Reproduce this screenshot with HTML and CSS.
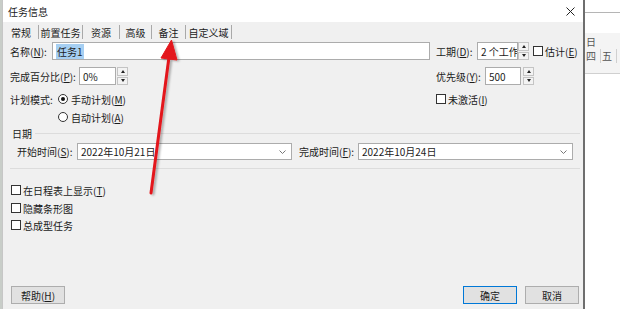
FILE: index.html
```
<!DOCTYPE html>
<html lang="zh-CN">
<head>
  <meta charset="UTF-8">
  <title>任务信息</title>
  <link rel="stylesheet" href="styles.css">
</head>
<body>
  <div class="screen">
    <div class="side-left"></div>

    <!-- Task info dialog -->
    <div class="dialog">
      <div class="titlebar">
        <span class="title">任务信息</span>
        <svg class="close" width="9" height="9" viewBox="0 0 9 9">
          <path d="M0.5 0.5 L8.5 8.5 M8.5 0.5 L0.5 8.5" stroke="#222" stroke-width="1"/>
        </svg>
      </div>

      <div class="tabs">
        <div class="tab active">常规</div>
        <div class="tab">前置任务</div>
        <div class="tab">资源</div>
        <div class="tab">高级</div>
        <div class="tab">备注</div>
        <div class="tab">自定义域</div>
      </div>

      <div class="panel">
        <div class="row row-field first">
          <div class="col-left">
            <span class="lbl lbl-name">名称(<u>N</u>):</span>
            <div class="input input-name"><span class="sel-text">任务1</span></div>
          </div>
          <div class="col-right">
            <span class="lbl lbl-dur">工期(<u>D</u>):</span>
            <div class="input input-dur">2 个工作日</div>
            <div class="spinner"><span class="up"></span><span class="down"></span></div>
            <span class="check gap-l"></span>
            <span>估计(<u>E</u>)</span>
          </div>
        </div>

        <div class="row row-field second">
          <div class="col-left">
            <span class="lbl lbl-pct">完成百分比(<u>P</u>):</span>
            <div class="input input-pct">0%</div>
            <div class="spinner sp-pct"><span class="up"></span><span class="down"></span></div>
          </div>
          <div class="col-right">
            <span class="lbl lbl-pri">优先级(<u>Y</u>):</span>
            <div class="input input-pri">500</div>
            <div class="spinner sp-pri"><span class="up"></span><span class="down"></span></div>
          </div>
        </div>

        <div class="row row-opt mode">
          <div class="col-left">
            <span class="lbl lbl-mode">计划模式:</span>
            <span class="radio checked"></span>
            <span>手动计划(<u>M</u>)</span>
          </div>
          <div class="col-right">
            <span class="check"></span>
            <span>未激活(<u>I</u>)</span>
          </div>
        </div>

        <div class="row row-opt auto">
          <span class="radio"></span>
          <span>自动计划(<u>A</u>)</span>
        </div>

        <div class="group-head">
          <span>日期</span>
          <div class="group-line"></div>
        </div>

        <div class="row date-row">
          <span class="lbl lbl-start">开始时间(<u>S</u>):</span>
          <div class="input select">
            <span>2022年10月21日</span>
            <svg width="7" height="4" viewBox="0 0 7 4"><path d="M0.5 0.5 L3.5 3.5 L6.5 0.5" fill="none" stroke="#777" stroke-width="1"/></svg>
          </div>
          <span class="lbl lbl-end">完成时间(<u>F</u>):</span>
          <div class="input select">
            <span>2022年10月24日</span>
            <svg width="7" height="4" viewBox="0 0 7 4"><path d="M0.5 0.5 L3.5 3.5 L6.5 0.5" fill="none" stroke="#777" stroke-width="1"/></svg>
          </div>
        </div>

        <div class="divider"></div>

        <div class="row row-opt cb-1"><span class="check"></span><span>在日程表上显示(<u>T</u>)</span></div>
        <div class="row row-opt cb-2"><span class="check"></span><span>隐藏条形图</span></div>
        <div class="row row-opt cb-3"><span class="check"></span><span>总成型任务</span></div>

        <div class="buttons">
          <button class="btn">帮助(<u>H</u>)</button>
          <div class="spacer"></div>
          <button class="btn primary">确定</button>
          <button class="btn">取消</button>
        </div>
      </div>
    </div>

    <!-- Gantt sheet behind the dialog -->
    <div class="backdrop">
      <div class="bd-top"></div>
      <div class="bd-head">
        <div class="bd-day">日</div>
        <div class="bd-week"><span>四</span><span>五</span></div>
      </div>
    </div>

    <!-- Red annotation arrow -->
    <svg class="arrow" width="620" height="309" viewBox="0 0 620 309">
      <defs>
        <filter id="shadow" x="-50%" y="-10%" width="200%" height="120%">
          <feDropShadow dx="2" dy="1" stdDeviation="1.2" flood-color="#000" flood-opacity="0.3"/>
        </filter>
      </defs>
      <g filter="url(#shadow)" fill="#e3151b" stroke="#e3151b">
        <line x1="151" y1="193" x2="169" y2="57" stroke-width="3" stroke-linecap="round"/>
        <polygon points="171.5,40 161,58 177,60" stroke-width="1" stroke-linejoin="round"/>
      </g>
    </svg>
  </div>
</body>
</html>
```
FILE: styles.css
```
/* Base */
* {
  box-sizing: border-box;
}

body {
  margin: 0;
  width: 620px;
  height: 309px;
  overflow: hidden;
  background: #fff;
  font-family: "Noto Sans CJK SC", "Noto Sans", sans-serif;
  font-size: 10px;
  color: #1b1b1b;
}

u {
  text-decoration: underline;
  text-underline-offset: 1px;
}

.screen {
  position: relative;
  display: flex;
  height: 309px;
}

.side-left {
  width: 2px;
  background: #c8cdc8;
}

/* Dialog frame */
.dialog {
  width: 583px;
  background: #f0f0f0;
  border-left: 1px solid #c6c6c6;
  border-right: 2px solid #6e6e6e;
  display: flex;
  flex-direction: column;
}

.titlebar {
  height: 22px;
  background: #fff;
  display: flex;
  align-items: center;
  justify-content: space-between;
  padding: 0 8px 0 5px;
  font-size: 10px;
}

/* Tabs */
.tabs {
  height: 18px;
  display: flex;
  padding-left: 5px;
}

.tab {
  display: flex;
  align-items: center;
  justify-content: center;
  margin: 3px 0 1px;
  border-right: 1px solid #a9a9a9;
}

.tab:nth-child(1) { width: 31px; justify-content: flex-start; padding-left: 3px; }
.tab:nth-child(2) { width: 44px; }
.tab:nth-child(3) { width: 37px; }
.tab:nth-child(4) { width: 32px; }
.tab:nth-child(5) { width: 34px; }
.tab:nth-child(6) { width: 46px; }

/* Form panel */
.panel {
  flex: 1;
  display: flex;
  flex-direction: column;
  padding: 0 3px 0 7px;
}

.row {
  display: flex;
  align-items: center;
}

.row-field {
  height: 18px;
}

.row-opt {
  height: 16px;
}

.first { margin-top: 2px; }
.second { margin-top: 7px; }
.mode { margin-top: 6px; }
.auto { margin-top: 2px; padding-left: 48px; }

.col-left {
  width: 426px;
  display: flex;
  align-items: center;
}

.col-right {
  display: flex;
  align-items: center;
}

.lbl {
  flex-shrink: 0;
}

.lbl-name { width: 42px; }
.lbl-dur { width: 41px; }
.lbl-pct { width: 69px; }
.lbl-pri { width: 49px; }
.lbl-mode { width: 48px; }
.lbl-start { width: 60px; }
.lbl-end { width: 59px; margin-left: 7px; }

.input {
  height: 18px;
  background: #fff;
  border: 1px solid #acacac;
  padding-left: 3px;
  display: flex;
  align-items: center;
  overflow: hidden;
  white-space: nowrap;
}

.input-name { width: 378px; }
.input-dur { width: 41px; }
.input-pct { width: 37px; }
.input-pri { width: 36px; }

.sel-text {
  background: #a6cff2;
  padding: 0 1px;
}

.spinner {
  width: 11px;
  height: 18px;
  display: flex;
  flex-direction: column;
  gap: 1px;
}

.sp-pct { margin-left: 1px; }
.sp-pri { margin-left: 2px; }

.spinner span {
  flex: 1;
  background: #f3f3f3;
  border: 1px solid #c4c4c4;
  display: flex;
  align-items: center;
  justify-content: center;
}

.spinner .up::before,
.spinner .down::before {
  content: '';
  border-left: 2.5px solid transparent;
  border-right: 2.5px solid transparent;
}

.spinner .up::before { border-bottom: 3px solid #222; }
.spinner .down::before { border-top: 3px solid #222; }

.check {
  width: 10px;
  height: 10px;
  border: 1px solid #333;
  background: #fff;
  margin-right: 2px;
  flex-shrink: 0;
}

.gap-l { margin-left: 4px; }

.radio {
  width: 10px;
  height: 10px;
  border: 1px solid #333;
  border-radius: 50%;
  background: #fff;
  margin-right: 3px;
  display: flex;
  align-items: center;
  justify-content: center;
}

.radio.checked::after {
  content: '';
  width: 4px;
  height: 4px;
  border-radius: 50%;
  background: #111;
}

/* Date group */
.group-head {
  margin-top: 2px;
  height: 12px;
  display: flex;
  align-items: center;
  padding-left: 2px;
}

.group-line {
  flex: 1;
  margin-left: 3px;
  border-top: 1px solid #dcdcdc;
}

.date-row {
  margin-top: 4px;
  height: 17px;
  padding-left: 7px;
}

.select {
  width: 215px;
  height: 17px;
  justify-content: space-between;
  padding-right: 5px;
}

.divider {
  margin-top: 8px;
  height: 1px;
  background: #dcdcdc;
}

.cb-1 { margin-top: 13px; padding-left: 1px; }
.cb-2 { margin-top: 2px; padding-left: 1px; }
.cb-3 { margin-top: 1px; padding-left: 1px; }

/* Buttons */
.buttons {
  margin-top: 53px;
  height: 18px;
  display: flex;
  padding: 0 1px;
}

.spacer {
  flex: 1;
}

.btn {
  width: 54px;
  height: 18px;
  padding: 0;
  font-family: inherit;
  font-size: 10px;
  color: #1b1b1b;
  background: #e1e1e1;
  border: 1px solid #adadad;
}

.btn.primary {
  border-color: #0078d7;
  margin-right: 8px;
}

/* Background sheet */
.backdrop {
  flex: 1;
  background: #fff;
  color: #555;
}

.bd-top {
  height: 13px;
  border-bottom: 1px solid #b5b5b5;
}

.bd-head {
  margin-top: 20px;
  height: 41px;
  background: #f4f4f4;
  border-bottom: 1px solid #d0d0d0;
  padding-top: 3px;
}

.bd-day {
  padding-left: 1px;
  line-height: 11px;
}

.bd-week {
  display: flex;
  margin-top: 2px;
}

.bd-week span {
  width: 16px;
  padding-left: 1px;
  border-right: 1px solid #d0d0d0;
  line-height: 14px;
}

.arrow {
  position: absolute;
  left: 0;
  top: 0;
  pointer-events: none;
}
```
